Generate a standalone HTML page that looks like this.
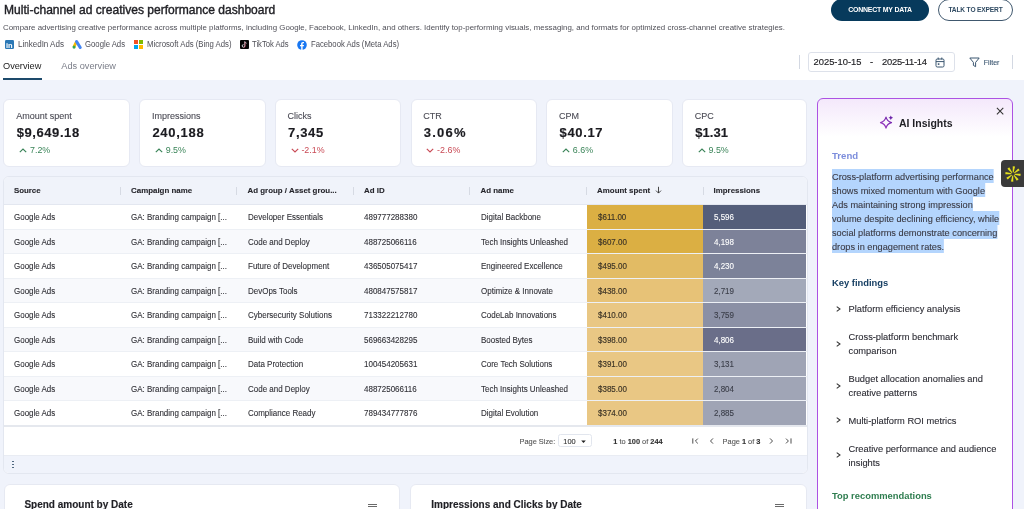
<!DOCTYPE html>
<html><head><meta charset="utf-8">
<style>
*{box-sizing:border-box;margin:0;padding:0}
html{will-change:transform}
.c,.pg,.aitxt,.kf,.lab,.hc{-webkit-text-stroke:0.1px currentColor}
.val,.title,.btitle{-webkit-text-stroke:0.15px currentColor}
html,body{width:1024px;height:509px;overflow:hidden;background:#f0f3fb;font-family:"Liberation Sans",sans-serif;color:#222}
.abs{position:absolute;white-space:nowrap}
#hdr{position:absolute;left:0;top:0;width:1024px;height:80.3px;background:#fff}
.title{left:4px;top:2.6px;font-size:12.05px;font-weight:normal;color:#1f1f24;line-height:14px;-webkit-text-stroke:0.4px #1f1f24 !important}
.sub{left:3px;top:22.6px;font-size:7.9px;color:#505058;line-height:10px}
.chip{top:38.8px;font-size:8.4px;color:#4e4e56;line-height:11px;transform:scaleX(0.92);transform-origin:0 50%}
.tab{top:59.8px;font-size:9.2px;line-height:12px}
.card{position:absolute;top:99px;height:67.8px;width:125.8px;background:#fff;border:1px solid #e6e9f3;border-radius:6px}
.card .lab{position:absolute;left:12.2px;top:10.6px;font-size:9px;color:#4b4b55;line-height:11px;white-space:nowrap}
.card .val{position:absolute;left:12.7px;top:25.3px;font-size:13px;font-weight:bold;color:#1b1b20;line-height:15px;white-space:nowrap}
.cv{position:absolute;left:15.3px;top:47.8px}
.card .chg{position:absolute;left:26px;top:45.3px;font-size:8.9px;line-height:10px;white-space:nowrap}
.pg{font-size:7.4px;color:#555;line-height:9px}
.pg b{color:#333}
.up{color:#3a8458}.dn{color:#c94a55}
#tbl{position:absolute;left:3px;top:176.2px;width:804.5px;height:297.8px;background:#fff;border:1px solid #e3e7f0;border-radius:6px;overflow:hidden}
.th{position:absolute;top:0;height:27.4px;left:0;width:802.5px;background:#f0f3fa;border-bottom:1px solid #e3e7f0}
.hc{position:absolute;top:9px;font-size:7.9px;font-weight:bold;color:#26262c;line-height:10px;white-space:nowrap}
.sep{position:absolute;top:9.6px;width:1px;height:8px;background:#d6dae3}
.row{position:absolute;left:0;width:802.5px;height:24.5px;border-bottom:1px solid #edf0f5}
.row.alt{background:#f8f9fc}
.c{position:absolute;top:7.3px;font-size:8.5px;transform:scaleX(0.94);transform-origin:0 50%;color:#303036;line-height:10px;white-space:nowrap}
.amt{position:absolute;left:582.5px;width:116.7px;height:23.5px;top:0}
.imp{position:absolute;left:699.2px;width:103.3px;height:23.5px;top:0}
.amt .c,.imp .c{left:11px}
.imp .c{left:10.7px}
.amt .c{color:#3b3326;-webkit-text-stroke:0.15px #3b3326}
.row.last{border-bottom:none}.row.last .amt,.row.last .imp{height:24.5px}
#ai{position:absolute;left:817px;top:98.4px;width:196px;height:430px;border:1.5px solid #ac52e3;border-radius:6px;background:linear-gradient(#f4e8fb 0px,#fff 38px)}
.aitxt{font-size:9.8px;color:#3a3a44;line-height:14px;transform:scaleX(0.94);transform-origin:0 0}
.hl{background:#b4d5fd;padding:1.6px 0}
.kf{position:absolute;left:30.5px;font-size:9.3px;color:#2c2c34;line-height:13.7px;white-space:nowrap}
.chev{position:absolute;left:20px;width:3.2px;height:3.2px;border-top:1px solid #333;border-right:1px solid #333;transform:rotate(45deg)}
.bcard{position:absolute;top:484px;height:60px;background:#fff;border:1px solid #e6e9f2;border-radius:6px}
.btitle{position:absolute;top:14px;font-size:10px;font-weight:bold;color:#1f1f24;line-height:12px;white-space:nowrap}
.ham{position:absolute;top:19.1px;width:9.4px;height:1.4px;border-top:1.7px solid #6a6a6a;border-bottom:1.7px solid #6a6a6a;box-sizing:content-box}
</style></head><body>
<div id="hdr">
  <div class="abs title">Multi-channel ad creatives performance dashboard</div>
  <div class="abs sub">Compare advertising creative performance across multiple platforms, including Google, Facebook, LinkedIn, and others. Identify top-performing visuals, messaging, and formats for optimized cross-channel creative strategies.</div>
  <!-- linkedin -->
  <div class="abs" style="left:5px;top:40px;width:9px;height:9px;background:#2a78b6;border-radius:1.2px"></div>
  <div class="abs" style="left:5.9px;top:40.5px;font-size:7.5px;font-weight:bold;color:#fff;line-height:9px">in</div>
  <div class="abs chip" style="left:18px;transform:scaleX(0.958)">LinkedIn Ads</div>
  <!-- google ads -->
  <svg class="abs" style="left:72px;top:40px" width="10" height="9" viewBox="0 0 10 9"><line x1="4.1" y1="2.4" x2="2.2" y2="6.3" stroke="#fbbc04" stroke-width="2.8" stroke-linecap="round"/><circle cx="2.05" cy="7.1" r="1.55" fill="#34a853"/><line x1="4.6" y1="1.6" x2="8.2" y2="7.5" stroke="#4285f4" stroke-width="3" stroke-linecap="round"/></svg>
  <div class="abs chip" style="left:85px;transform:scaleX(0.924)">Google Ads</div>
  <!-- microsoft -->
  <div class="abs" style="left:134px;top:40px;width:4.1px;height:4.1px;background:#f25022"></div>
  <div class="abs" style="left:138.6px;top:40px;width:4.1px;height:4.1px;background:#7fba00"></div>
  <div class="abs" style="left:134px;top:44.6px;width:4.1px;height:4.1px;background:#00a4ef"></div>
  <div class="abs" style="left:138.6px;top:44.6px;width:4.1px;height:4.1px;background:#ffb900"></div>
  <div class="abs chip" style="left:146.5px;transform:scaleX(0.927)">Microsoft Ads (Bing Ads)</div>
  <!-- tiktok -->
  <div class="abs" style="left:240px;top:40px;width:9px;height:9px;background:#050505;border-radius:1px"></div>
  <svg class="abs" style="left:240px;top:40px" width="9" height="9" viewBox="0 0 9 9"><path d="M4.8 1.6v4.3a1.3 1.3 0 1 1-1.3-1.3M4.8 1.6c.2.9.8 1.5 1.7 1.6" fill="none" stroke="#e8e8ee" stroke-width="0.9"/><path d="M5.1 2v4.3a1.3 1.3 0 0 1-1.5 1.2" fill="none" stroke="#e33a5a" stroke-width="0.5"/></svg>
  <div class="abs chip" style="left:252.3px;transform:scaleX(0.913)">TikTok Ads</div>
  <!-- facebook -->
  <svg class="abs" style="left:297.1px;top:39.5px" width="10" height="10" viewBox="0 0 10 10"><circle cx="5" cy="5" r="4.8" fill="#1877f2"/><path d="M5.6 10V6.3h1.2l.2-1.4H5.6V4c0-.4.1-.7.7-.7h.7V2.1c-.1 0-.6-.1-1.1-.1-1.1 0-1.8.7-1.8 1.9v1H3v1.4h1.2V10z" fill="#fff"/></svg>
  <div class="abs chip" style="left:310.5px;transform:scaleX(0.918)">Facebook Ads (Meta Ads)</div>
  <div class="abs tab" style="left:3px;color:#222">Overview</div>
  <div class="abs tab" style="left:61.3px;color:#7a7d88">Ads overview</div>
  <div class="abs" style="left:3px;top:78.2px;width:39px;height:2px;background:#1d4a6b"></div>
  <!-- buttons -->
  <div class="abs" style="left:831px;top:-1px;width:98px;height:22px;background:#073a5c;border-radius:11px"></div>
  <div class="abs" style="left:831px;top:6px;width:98px;text-align:center;font-size:6.95px;font-weight:bold;color:#fff;line-height:8px;letter-spacing:-0.2px">CONNECT MY DATA</div>
  <div class="abs" style="left:938px;top:-1px;width:75px;height:22px;border:1px solid #40586e;border-radius:11px;background:#fff"></div>
  <div class="abs" style="left:938px;top:6px;width:75px;text-align:center;font-size:6.6px;font-weight:bold;color:#2f4a62;line-height:8px;letter-spacing:-0.15px">TALK TO EXPERT</div>
  <!-- date -->
  <div class="abs" style="left:798.5px;top:55px;width:1px;height:14px;background:#d3d8e2"></div>
  <div class="abs" style="left:808px;top:52px;width:146.5px;height:19.5px;border:1px solid #dde1ea;border-radius:3px"></div>
  <div class="abs" style="left:813.5px;top:56.8px;font-size:9.4px;color:#1e1e22;line-height:9px;-webkit-text-stroke:0.15px #1e1e22">2025-10-15</div>
  <div class="abs" style="left:870px;top:56.8px;font-size:9.4px;color:#1e1e22;line-height:9px;-webkit-text-stroke:0.15px #1e1e22">-</div>
  <div class="abs" style="left:882px;top:56.8px;font-size:9.4px;color:#1e1e22;line-height:9px;-webkit-text-stroke:0.15px #1e1e22;letter-spacing:-0.25px">2025-11-14</div>
  <svg class="abs" style="left:934.5px;top:57px" width="10" height="11" viewBox="0 0 10 11"><rect x="1" y="2" width="8" height="8" rx="1.3" fill="none" stroke="#3b5670" stroke-width="1"/><line x1="1" y1="4.6" x2="9" y2="4.6" stroke="#3b5670" stroke-width="1"/><line x1="3.2" y1="0.5" x2="3.2" y2="2.5" stroke="#3b5670" stroke-width="1"/><line x1="6.8" y1="0.5" x2="6.8" y2="2.5" stroke="#3b5670" stroke-width="1"/><rect x="2.8" y="6.3" width="1.6" height="1.6" fill="#3b5670"/></svg>
  <svg class="abs" style="left:968.5px;top:57px" width="11" height="11" viewBox="0 0 11 11"><path d="M0.8 1h9.4L6.6 5.4v4.3L4.4 8.4V5.4z" fill="none" stroke="#3b5670" stroke-width="1" stroke-linejoin="round"/></svg>
  <div class="abs" style="left:983.8px;top:58.5px;font-size:7px;color:#3b5670;line-height:8px;-webkit-text-stroke:0.12px #3b5670">Filter</div>
  <div class="abs" style="left:1012px;top:55px;width:1px;height:14px;background:#d3d8e2"></div>
</div>
<div class="card" style="left:3px;width:127px"><div style="position:absolute;left:0.00px;top:0"><div class="lab">Amount spent</div><div class="val" style="letter-spacing:0.58px">$9,649.18</div><div class="up"><svg class="cv" width="8" height="5" viewBox="0 0 8 5"><path d="M0.8 4.2L4 1 7.2 4.2" fill="none" stroke="currentColor" stroke-width="1.15"/></svg><div class="chg">7.2%</div></div></div></div>
<div class="card" style="left:139px;width:127px"><div style="position:absolute;left:-0.30px;top:0"><div class="lab">Impressions</div><div class="val" style="letter-spacing:0.71px">240,188</div><div class="up"><svg class="cv" width="8" height="5" viewBox="0 0 8 5"><path d="M0.8 4.2L4 1 7.2 4.2" fill="none" stroke="currentColor" stroke-width="1.15"/></svg><div class="chg">9.5%</div></div></div></div>
<div class="card" style="left:275px;width:126px"><div style="position:absolute;left:-0.60px;top:0"><div class="lab">Clicks</div><div class="val" style="letter-spacing:0.64px">7,345</div><div class="dn"><svg class="cv" width="8" height="5" viewBox="0 0 8 5"><path d="M0.8 0.8L4 4 7.2 0.8" fill="none" stroke="currentColor" stroke-width="1.15"/></svg><div class="chg">-2.1%</div></div></div></div>
<div class="card" style="left:411px;width:126px"><div style="position:absolute;left:-0.90px;top:0"><div class="lab">CTR</div><div class="val" style="letter-spacing:1.22px">3.06%</div><div class="dn"><svg class="cv" width="8" height="5" viewBox="0 0 8 5"><path d="M0.8 0.8L4 4 7.2 0.8" fill="none" stroke="currentColor" stroke-width="1.15"/></svg><div class="chg">-2.6%</div></div></div></div>
<div class="card" style="left:546px;width:127px"><div style="position:absolute;left:-0.20px;top:0"><div class="lab">CPM</div><div class="val" style="letter-spacing:0.65px">$40.17</div><div class="up"><svg class="cv" width="8" height="5" viewBox="0 0 8 5"><path d="M0.8 4.2L4 1 7.2 4.2" fill="none" stroke="currentColor" stroke-width="1.15"/></svg><div class="chg">6.6%</div></div></div></div>
<div class="card" style="left:682px;width:125px"><div style="position:absolute;left:-0.50px;top:0"><div class="lab">CPC</div><div class="val" style="letter-spacing:0.05px">$1.31</div><div class="up"><svg class="cv" width="8" height="5" viewBox="0 0 8 5"><path d="M0.8 4.2L4 1 7.2 4.2" fill="none" stroke="currentColor" stroke-width="1.15"/></svg><div class="chg">9.5%</div></div></div></div>
<div id="tbl">
<div class="th">
<div class="hc" style="left:9.9px">Source</div>
<div class="hc" style="left:127.1px">Campaign name</div>
<div class="hc" style="left:243.6px">Ad group / Asset grou...</div>
<div class="hc" style="left:360.1px">Ad ID</div>
<div class="hc" style="left:476.6px">Ad name</div>
<div class="hc" style="left:593.1px">Amount spent</div>
<div class="hc" style="left:709.6px">Impressions</div>
<svg class="abs" style="left:650.5px;top:9.3px" width="7" height="8" viewBox="0 0 7 8"><path d="M3.5 0.8v6.2M1 4.6l2.5 2.5 2.5-2.5" fill="none" stroke="#333" stroke-width="0.9"/></svg>
<div class="sep" style="left:115.6px"></div>
<div class="sep" style="left:232.2px"></div>
<div class="sep" style="left:348.8px"></div>
<div class="sep" style="left:465.4px"></div>
<div class="sep" style="left:582px"></div>
<div class="sep" style="left:698.6px"></div>
</div>
<div class="row" style="top:27.9px">
<div class="c" style="left:9.9px">Google Ads</div>
<div class="c" style="left:127.1px">GA: Branding campaign [...</div>
<div class="c" style="left:243.6px">Developer Essentials</div>
<div class="c" style="left:360.1px">489777288380</div>
<div class="c" style="left:476.6px">Digital Backbone</div>
<div class="amt" style="background:#dbaf43"><div class="c">$611.00</div></div>
<div class="imp" style="background:#545e7a"><div class="c" style="color:#fff">5,596</div></div>
</div>
<div class="row alt" style="top:52.4px">
<div class="c" style="left:9.9px">Google Ads</div>
<div class="c" style="left:127.1px">GA: Branding campaign [...</div>
<div class="c" style="left:243.6px">Code and Deploy</div>
<div class="c" style="left:360.1px">488725066116</div>
<div class="c" style="left:476.6px">Tech Insights Unleashed</div>
<div class="amt" style="background:#dbaf43"><div class="c">$607.00</div></div>
<div class="imp" style="background:#7d8299"><div class="c" style="color:#fff">4,198</div></div>
</div>
<div class="row" style="top:76.9px">
<div class="c" style="left:9.9px">Google Ads</div>
<div class="c" style="left:127.1px">GA: Branding campaign [...</div>
<div class="c" style="left:243.6px">Future of Development</div>
<div class="c" style="left:360.1px">436505075417</div>
<div class="c" style="left:476.6px">Engineered Excellence</div>
<div class="amt" style="background:#e2bb64"><div class="c">$495.00</div></div>
<div class="imp" style="background:#7c8299"><div class="c" style="color:#fff">4,230</div></div>
</div>
<div class="row alt" style="top:101.4px">
<div class="c" style="left:9.9px">Google Ads</div>
<div class="c" style="left:127.1px">GA: Branding campaign [...</div>
<div class="c" style="left:243.6px">DevOps Tools</div>
<div class="c" style="left:360.1px">480847575817</div>
<div class="c" style="left:476.6px">Optimize &amp; Innovate</div>
<div class="amt" style="background:#e7c277"><div class="c">$438.00</div></div>
<div class="imp" style="background:#a3a9b9"><div class="c" style="color:#3a3d48">2,719</div></div>
</div>
<div class="row" style="top:125.9px">
<div class="c" style="left:9.9px">Google Ads</div>
<div class="c" style="left:127.1px">GA: Branding campaign [...</div>
<div class="c" style="left:243.6px">Cybersecurity Solutions</div>
<div class="c" style="left:360.1px">713322212780</div>
<div class="c" style="left:476.6px">CodeLab Innovations</div>
<div class="amt" style="background:#e9c784"><div class="c">$410.00</div></div>
<div class="imp" style="background:#8b90a5"><div class="c" style="color:#3a3d48">3,759</div></div>
</div>
<div class="row alt" style="top:150.4px">
<div class="c" style="left:9.9px">Google Ads</div>
<div class="c" style="left:127.1px">GA: Branding campaign [...</div>
<div class="c" style="left:243.6px">Build with Code</div>
<div class="c" style="left:360.1px">569663428295</div>
<div class="c" style="left:476.6px">Boosted Bytes</div>
<div class="amt" style="background:#e9c784"><div class="c">$398.00</div></div>
<div class="imp" style="background:#6a6e89"><div class="c" style="color:#fff">4,806</div></div>
</div>
<div class="row" style="top:174.9px">
<div class="c" style="left:9.9px">Google Ads</div>
<div class="c" style="left:127.1px">GA: Branding campaign [...</div>
<div class="c" style="left:243.6px">Data Protection</div>
<div class="c" style="left:360.1px">100454205631</div>
<div class="c" style="left:476.6px">Core Tech Solutions</div>
<div class="amt" style="background:#e9c784"><div class="c">$391.00</div></div>
<div class="imp" style="background:#9fa4b5"><div class="c" style="color:#3a3d48">3,131</div></div>
</div>
<div class="row alt" style="top:199.4px">
<div class="c" style="left:9.9px">Google Ads</div>
<div class="c" style="left:127.1px">GA: Branding campaign [...</div>
<div class="c" style="left:243.6px">Code and Deploy</div>
<div class="c" style="left:360.1px">488725066116</div>
<div class="c" style="left:476.6px">Tech Insights Unleashed</div>
<div class="amt" style="background:#e9c784"><div class="c">$385.00</div></div>
<div class="imp" style="background:#a0a5b6"><div class="c" style="color:#3a3d48">2,804</div></div>
</div>
<div class="row last" style="top:223.9px">
<div class="c" style="left:9.9px">Google Ads</div>
<div class="c" style="left:127.1px">GA: Branding campaign [...</div>
<div class="c" style="left:243.6px">Compliance Ready</div>
<div class="c" style="left:360.1px">789434777876</div>
<div class="c" style="left:476.6px">Digital Evolution</div>
<div class="amt" style="background:#e9c784"><div class="c">$374.00</div></div>
<div class="imp" style="background:#9fa4b5"><div class="c" style="color:#3a3d48">2,885</div></div>
</div>
<div class="abs" style="left:0;top:247.9px;width:802.5px;height:2px;background:#e5e8ee"></div>
<div class="abs pg" style="left:515.5px;top:259.7px">Page Size:</div>
<div class="abs" style="left:553.5px;top:257.2px;width:34.3px;height:12.8px;border:1px solid #e2e6ee;border-radius:2.5px"></div>
<div class="abs pg" style="left:559.3px;top:259.7px;color:#333">100</div>
<svg class="abs" style="left:577.4px;top:262.4px" width="5" height="4" viewBox="0 0 5 4"><path d="M0.2 0.4h4.6L2.5 3z" fill="#222"/></svg>
<div class="abs pg" style="left:609.3px;top:259.7px"><b>1</b> to <b>100</b> of <b>244</b></div>
<svg class="abs" style="left:687.5px;top:261px" width="7" height="6" viewBox="0 0 7 6"><path d="M0.8 0.4v5.2M5.8 0.6L3.4 3 5.8 5.4" fill="none" stroke="#444" stroke-width="0.95"/></svg>
<svg class="abs" style="left:704.5px;top:261px" width="5" height="6" viewBox="0 0 5 6"><path d="M4 0.4L1.5 3 4 5.6" fill="none" stroke="#444" stroke-width="0.95"/></svg>
<div class="abs pg" style="left:718.6px;top:259.7px">Page <b>1</b> of <b>3</b></div>
<svg class="abs" style="left:765px;top:261px" width="5" height="6" viewBox="0 0 5 6"><path d="M1 0.4L3.5 3 1 5.6" fill="none" stroke="#444" stroke-width="0.95"/></svg>
<svg class="abs" style="left:780.5px;top:261px" width="7" height="6" viewBox="0 0 7 6"><path d="M1 0.6L3.4 3 1 5.4M6 0.4v5.2" fill="none" stroke="#444" stroke-width="0.95"/></svg>
<div class="abs" style="left:0;top:277.9px;width:802.5px;height:22px;background:#f0f3fb;border-top:1px solid #e9ecf3"></div>
<div class="abs" style="left:7.9px;top:283.6px;width:1.7px;height:1.6px;background:#3b5670;border-radius:1px"></div>
<div class="abs" style="left:7.9px;top:286.6px;width:1.7px;height:1.6px;background:#3b5670;border-radius:1px"></div>
<div class="abs" style="left:7.9px;top:289.6px;width:1.7px;height:1.6px;background:#3b5670;border-radius:1px"></div>
</div><div id="ai">
  <svg class="abs" style="left:61.8px;top:16.6px" width="15" height="15" viewBox="0 0 15 15" overflow="visible"><defs><linearGradient id="sg" x1="0" y1="1" x2="1" y2="0"><stop offset="0" stop-color="#a23fc4"/><stop offset="1" stop-color="#6a22a8"/></linearGradient></defs><path d="M6 1.1Q7.1 5.5 11.5 6.6Q7.1 7.7 6 12.1Q4.9 7.7 0.5 6.6Q4.9 5.5 6 1.1Z" fill="none" stroke="url(#sg)" stroke-width="1.2" stroke-linejoin="round"/><path d="M10.8 -0.5Q11.2 1.4 13.1 1.8Q11.2 2.2 10.8 4.1Q10.4 2.2 8.5 1.8Q10.4 1.4 10.8 -0.5Z" fill="#6a22a8"/></svg>
  <div class="abs" style="left:80.9px;top:17.9px;font-size:10.5px;font-weight:bold;color:#1f1f24;line-height:12px">AI Insights</div>
  <svg class="abs" style="left:177.6px;top:7.7px" width="8" height="8" viewBox="0 0 8 8"><path d="M0.9 0.9l6.4 6.4M7.3 0.9L0.9 7.3" stroke="#333" stroke-width="1.05"/></svg>
  <div class="abs" style="left:14px;top:50.5px;font-size:9.6px;font-weight:bold;color:#7c8ddc;line-height:11px">Trend</div>
  <div class="abs aitxt" style="left:14px;top:70.5px;white-space:normal;width:200px">
   <span class="hl">Cross-platform advertising performance</span><br><span class="hl">shows mixed momentum with Google</span><br><span class="hl">Ads maintaining strong impression</span><br><span class="hl">volume despite declining efficiency, while</span><br><span class="hl">social platforms demonstrate concerning</span><br><span class="hl">drops in engagement rates.</span>
  </div>
  <div class="abs" style="left:14px;top:177.9px;font-size:9.4px;font-weight:bold;color:#173f63;line-height:11px">Key findings</div>
  <svg class="abs" style="left:18px;top:206.3px" width="5" height="6" viewBox="0 0 5 6"><path d="M0.7 0.6L4 3 0.7 5.4" fill="none" stroke="#333" stroke-width="1.05"/></svg>
  <div class="kf" style="top:203.7px">Platform efficiency analysis</div>
  <svg class="abs" style="left:18px;top:241.2px" width="5" height="6" viewBox="0 0 5 6"><path d="M0.7 0.6L4 3 0.7 5.4" fill="none" stroke="#333" stroke-width="1.05"/></svg>
  <div class="kf" style="top:231.7px">Cross-platform benchmark<br>comparison</div>
  <svg class="abs" style="left:18px;top:283.5px" width="5" height="6" viewBox="0 0 5 6"><path d="M0.7 0.6L4 3 0.7 5.4" fill="none" stroke="#333" stroke-width="1.05"/></svg>
  <div class="kf" style="top:274.0px">Budget allocation anomalies and<br>creative patterns</div>
  <svg class="abs" style="left:18px;top:318.1px" width="5" height="6" viewBox="0 0 5 6"><path d="M0.7 0.6L4 3 0.7 5.4" fill="none" stroke="#333" stroke-width="1.05"/></svg>
  <div class="kf" style="top:315.5px">Multi-platform ROI metrics</div>
  <svg class="abs" style="left:18px;top:353.1px" width="5" height="6" viewBox="0 0 5 6"><path d="M0.7 0.6L4 3 0.7 5.4" fill="none" stroke="#333" stroke-width="1.05"/></svg>
  <div class="kf" style="top:343.7px">Creative performance and audience<br>insights</div>
  <div class="abs" style="left:14px;top:390.8px;font-size:9.4px;font-weight:bold;color:#2e7d4f;line-height:11px">Top recommendations</div>
</div>
<div class="abs" style="left:1001.2px;top:159.6px;width:30px;height:27.3px;background:#3a3a3a;border-radius:4px"></div>
<svg class="abs" style="left:1004.8px;top:165.8px" width="16" height="16" viewBox="-8 -8 16 16"><g fill="#e6e11c"><polygon points="1.54,0.63 7.41,2.04 7.68,-0.25 1.64,-0.26"/><polygon points="0.64,1.54 3.80,6.68 5.61,5.26 1.34,0.98"/><polygon points="-0.63,1.54 -2.04,7.41 0.25,7.68 0.26,1.64"/><polygon points="-1.54,0.64 -6.68,3.80 -5.26,5.61 -0.98,1.34"/><polygon points="-1.54,-0.63 -7.41,-2.04 -7.68,0.25 -1.64,0.26"/><polygon points="-0.64,-1.54 -3.80,-6.68 -5.61,-5.26 -1.34,-0.98"/><polygon points="0.63,-1.54 2.04,-7.41 -0.25,-7.68 -0.26,-1.64"/><polygon points="1.54,-0.64 6.68,-3.80 5.26,-5.61 0.98,-1.34"/></g></svg>
<div class="bcard" style="left:3.5px;width:396.8px"><div class="btitle" style="left:19.9px">Spend amount by Date</div><div class="ham" style="left:363.4px"></div></div>
<div class="bcard" style="left:409.8px;width:397.5px"><div class="btitle" style="left:20.5px">Impressions and Clicks by Date</div><div class="ham" style="left:364.2px"></div></div>
</body></html>
